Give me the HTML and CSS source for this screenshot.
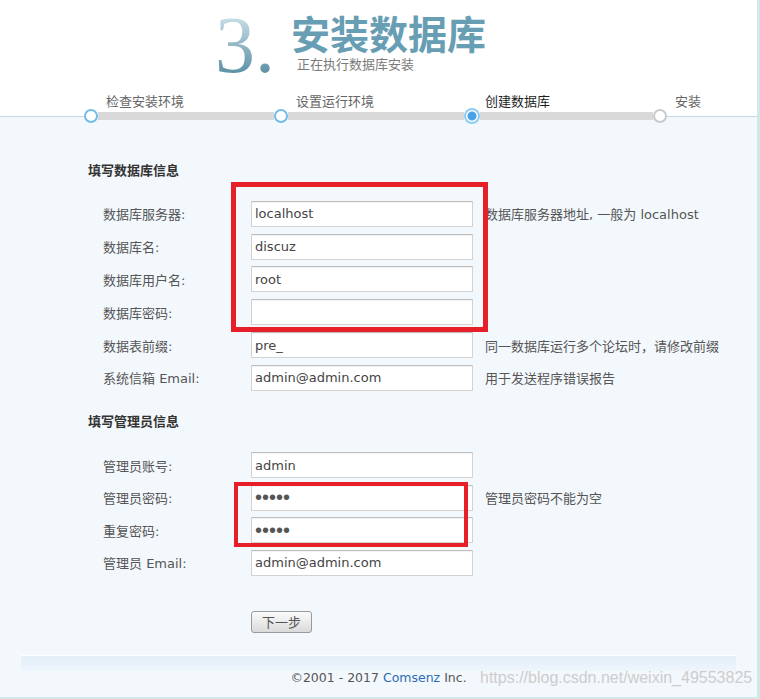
FILE: index.html
```html
<!DOCTYPE html>
<html lang="zh-CN">
<head>
<meta charset="utf-8">
<title>安装数据库</title>
<link rel="stylesheet" href="styles.css">
</head>
<body>
<div class="page">
  <header class="head">
    <div class="brand">
      <span class="num">3.</span>
      <div class="titles">
        <h1>安装数据库</h1>
        <p>正在执行数据库安装</p>
      </div>
    </div>
  </header>
  <div class="step-labels">
    <span>检查安装环境</span>
    <span>设置运行环境</span>
    <span class="current">创建数据库</span>
    <span>安装</span>
  </div>
  <div class="track">
    <span class="dot"></span><span class="bar"></span>
    <span class="dot"></span><span class="bar"></span>
    <span class="dot active"></span><span class="bar last"></span>
    <span class="dot todo"></span>
  </div>

  <main class="content">
    <h2>填写数据库信息</h2>
    <div class="rows">
      <label>数据库服务器:</label><input class="field" type="text" value="localhost"><span class="desc">数据库服务器地址, 一般为 localhost</span>
      <label>数据库名:</label><input class="field" type="text" value="discuz"><span class="desc"></span>
      <label>数据库用户名:</label><input class="field" type="text" value="root"><span class="desc"></span>
      <label>数据库密码:</label><input class="field" type="password" value=""><span class="desc"></span>
      <label>数据表前缀:</label><input class="field" type="text" value="pre_"><span class="desc">同一数据库运行多个论坛时，请修改前缀</span>
      <label>系统信箱 Email:</label><input class="field" type="text" value="admin@admin.com"><span class="desc">用于发送程序错误报告</span>
    </div>

    <h2 class="second">填写管理员信息</h2>
    <div class="rows admin">
      <label>管理员账号:</label><input class="field" type="text" value="admin"><span class="desc"></span>
      <label>管理员密码:</label><input class="field pw" type="password" value="admin"><span class="desc">管理员密码不能为空</span>
      <label>重复密码:</label><input class="field pw" type="password" value="admin"><span class="desc"></span>
      <label>管理员 Email:</label><input class="field" type="text" value="admin@admin.com"><span class="desc"></span>
    </div>

    <div class="actions"><button class="btn" type="button">下一步</button></div>
  </main>

  <div class="band"></div>
  <footer class="foot">©2001 - 2017 <a href="#">Comsenz</a> Inc.</footer>

  <div class="mark mark-db"></div>
  <div class="mark mark-pw"></div>
  <div class="watermark">https://blog.csdn.net/weixin_49553825</div>
</div>
</body>
</html>
```

FILE: styles.css
```css
html, body {
  margin: 0;
  padding: 0;
  background: #ffffff;
}

.page {
  position: relative;
  width: 757px;
  height: 697px;
  background: #f3f8fc;
  border-right: 3px solid #d3e6e9;
  border-bottom: 2px solid #d3e6e9;
  font-family: "DejaVu Sans", "Noto Sans CJK SC", sans-serif;
  font-size: 13px;
  color: #555;
  overflow: hidden;
}

.head {
  height: 94px;
  background: #fff;
}

.brand {
  display: flex;
  align-items: flex-start;
  height: 94px;
  padding: 0 0 0 215px;
}

.num {
  margin-top: 1px;
  font-family: "Liberation Serif", serif;
  font-size: 80px;
  line-height: 89px;
  background: linear-gradient(to bottom, #c4dbe5 20%, #5c8fa5 82%);
  -webkit-background-clip: text;
  background-clip: text;
  color: transparent;
}

.titles {
  margin-left: 16px;
  padding-top: 12px;
}

.titles h1 {
  margin: 0;
  font-family: "Noto Sans CJK SC", sans-serif;
  font-size: 39px;
  line-height: 40px;
  font-weight: bold;
  color: #689eb4;
}

.titles p {
  margin: 5px 0 0 6px;
  font-family: "Noto Sans CJK SC", sans-serif;
  font-size: 13px;
  line-height: 14px;
  color: #7a7a7a;
}

.step-labels {
  display: flex;
  height: 14px;
  padding-left: 106px;
  background: #fff;
  font-family: "Noto Sans CJK SC", sans-serif;
  font-size: 13px;
  line-height: 14px;
  color: #666;
}

.step-labels span {
  width: 190px;
  flex: none;
}

.step-labels span:nth-child(2) {
  width: 189px;
}

.step-labels .current {
  color: #1e1e1e;
}

.track {
  display: flex;
  align-items: center;
  height: 16px;
  padding-left: 84px;
  background: linear-gradient(to bottom, #fff 0, #fff 8px, #c3d9e3 8px, #c3d9e3 9px, #f3f8fc 9px);
}

.dot {
  flex: none;
  box-sizing: border-box;
  width: 14px;
  height: 14px;
  border: 2px solid #72bdea;
  border-radius: 50%;
  background: #fff;
}

.dot.active {
  width: 16px;
  height: 16px;
  border-color: #90ccf0;
  background: radial-gradient(circle, #49a2e5 0, #49a2e5 4px, #fff 5px);
}

.dot.todo {
  border-color: #c9c9c9;
}

.bar {
  flex: none;
  width: 176px;
  height: 8px;
  background: #d9d9d9;
}

.bar.last {
  width: 173px;
}

.content {
  padding: 36px 0 22px 88px;
}

.content h2 {
  margin: 0;
  font-family: "Noto Sans CJK SC", sans-serif;
  font-size: 13px;
  line-height: 20px;
  font-weight: bold;
  color: #333;
}

.content h2.second {
  margin-top: 17px;
}

.rows {
  display: grid;
  grid-template-columns: 148px 234px auto;
  grid-auto-rows: 32.8px;
  align-items: center;
  margin-top: 17.5px;
  padding-left: 15px;
}

.rows.admin {
  grid-auto-rows: 32.5px;
  margin-top: 17.5px;
}

.rows label {
  color: #555;
  white-space: nowrap;
}

.field {
  box-sizing: border-box;
  width: 222px;
  height: 26px;
  margin: 0;
  padding: 0 3px;
  border: 1px solid #d2d2d2;
  border-top-color: #bdbdbd;
  border-radius: 1px;
  background: #fff;
  box-shadow: inset 0 1px 1px rgba(0, 0, 0, 0.05);
  font-family: "DejaVu Sans", sans-serif;
  font-size: 13px;
  color: #444;
  outline: none;
}

.field.pw {
  font-family: "Liberation Sans", sans-serif;
  font-size: 20px;
  color: #555;
}

.desc {
  color: #555;
  white-space: nowrap;
}

.actions {
  margin-top: 32.5px;
  padding-left: 163px;
}

.btn {
  box-sizing: border-box;
  width: 61px;
  height: 22px;
  margin: 0;
  padding: 0;
  border: 1px solid #9a9a9a;
  border-radius: 3px;
  background: linear-gradient(to bottom, #fbfbfb, #dadada);
  font-family: "Noto Sans CJK SC", sans-serif;
  font-size: 13px;
  line-height: 18px;
  color: #555;
}

.band {
  height: 15px;
  margin: 0 21px;
  border-top: 1px solid #fff;
  background: linear-gradient(to bottom, #e3eff9, #eef5fc);
}

.foot {
  margin-top: -1px;
  text-align: center;
  font-family: "DejaVu Sans", sans-serif;
  font-size: 12.5px;
  line-height: 16px;
  color: #555;
}

.foot a {
  color: #2b6cb8;
  text-decoration: none;
}

.mark {
  position: absolute;
  box-sizing: border-box;
  border: 5px solid #e61f29;
}

.mark-db {
  left: 231px;
  top: 182px;
  width: 257px;
  height: 150px;
}

.mark-pw {
  left: 234px;
  top: 482px;
  width: 234px;
  height: 65px;
  border-width: 4px;
}

.watermark {
  position: absolute;
  left: 480px;
  top: 669px;
  font-family: "Liberation Sans", sans-serif;
  font-size: 16px;
  line-height: 18px;
  color: #cdcdcd;
  white-space: nowrap;
}
```
